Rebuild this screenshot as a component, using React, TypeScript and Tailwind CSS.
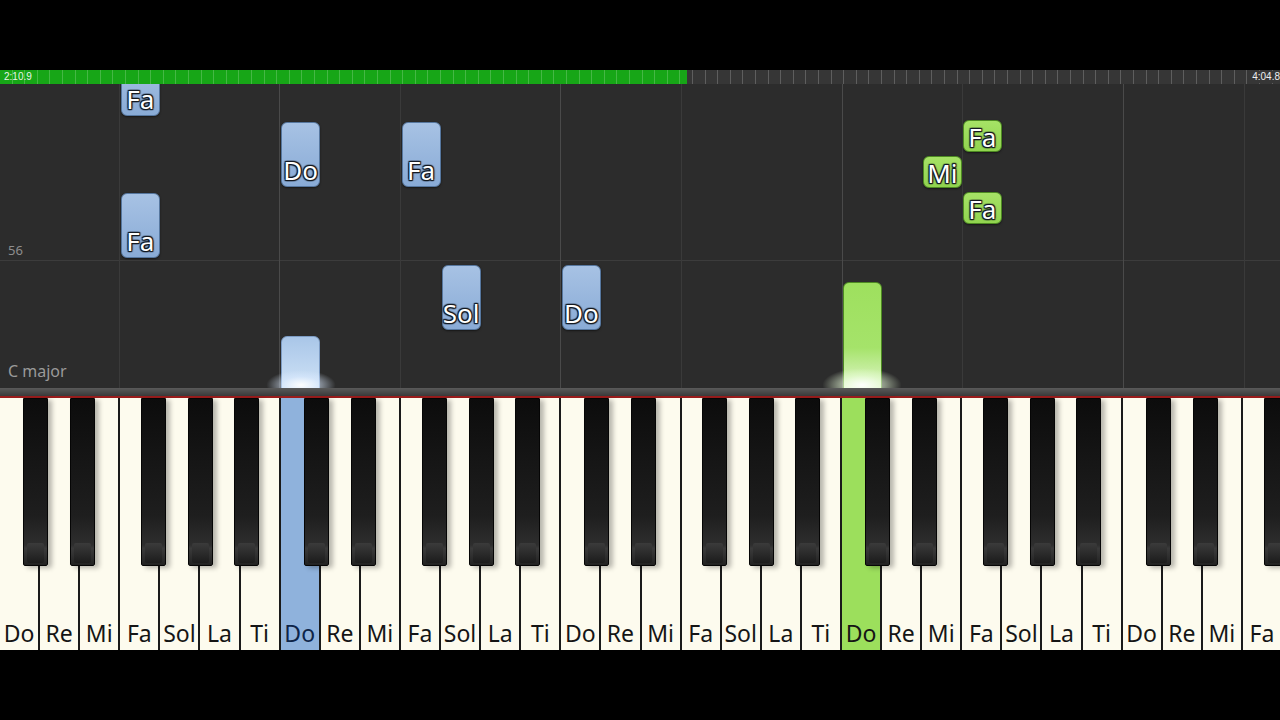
import React from "react";

const KEY_W = 40.1;
const names = ["Do", "Re", "Mi", "Fa", "Sol", "La", "Ti"];
const whiteKeys = Array.from({ length: 32 }, (_, i) => names[i % 7]);
// offsets of the black keys inside one octave
const blackOffsets = [23, 70, 141, 188, 234];
const blackKeys: number[] = [];
for (let o = 0; o < 5; o++) {
  blackOffsets.forEach((b) => {
    const x = o * 7 * KEY_W + b;
    if (x < 1280) blackKeys.push(x);
  });
}

type Note = { key: number; top: number; h: number; label: string; color: "blue" | "green" };

const notes: Note[] = [
  { key: 3, top: -24, h: 56, label: "Fa", color: "blue" },
  { key: 7, top: 38, h: 65, label: "Do", color: "blue" },
  { key: 10, top: 38, h: 65, label: "Fa", color: "blue" },
  { key: 3, top: 109, h: 65, label: "Fa", color: "blue" },
  { key: 11, top: 181, h: 65, label: "Sol", color: "blue" },
  { key: 14, top: 181, h: 65, label: "Do", color: "blue" },
  { key: 24, top: 36, h: 32, label: "Fa", color: "green" },
  { key: 23, top: 72, h: 32, label: "Mi", color: "green" },
  { key: 24, top: 108, h: 32, label: "Fa", color: "green" },
];

const vLines = [
  { x: 119, bright: false },
  { x: 279, bright: true },
  { x: 400, bright: false },
  { x: 560, bright: true },
  { x: 681, bright: false },
  { x: 842, bright: true },
  { x: 962, bright: false },
  { x: 1123, bright: true },
  { x: 1244, bright: false },
];

const outline =
  "[text-shadow:0_0_2px_#141a22,1px_1px_1px_#141a22,-1px_-1px_1px_#141a22,1px_-1px_1px_#141a22,-1px_1px_1px_#141a22,0_1px_1px_#141a22,0_-1px_1px_#141a22]";

const App = () => {
  return (
    <div className="w-[1280px] h-[720px] bg-black flex flex-col overflow-hidden font-['Noto_Sans',sans-serif]">
      {/* TOP BLACK */}
      <div className="h-[70px] shrink-0" />

      {/* PROGRESS BAR */}
      <div className="h-[14px] shrink-0 flex relative bg-[#363636]">
        <div className="w-[687px] h-full bg-[#17a617]" />
        <div className="absolute inset-0 bg-[repeating-linear-gradient(90deg,transparent_0,transparent_11.6px,rgba(255,255,255,0.2)_11.6px,rgba(255,255,255,0.2)_12.6px)]" />
        <span className="absolute left-[4px] top-[1px] text-[10px] leading-[12px] text-[#e8f5e8] font-['Liberation_Sans',sans-serif]">
          2:10.9
        </span>
        <span className="absolute right-0 top-[1px] text-[10px] leading-[12px] text-[#eee] font-['Liberation_Sans',sans-serif] bg-[#363636] pl-[2px]">
          4:04.8
        </span>
      </div>

      {/* NOTE AREA */}
      <div className="h-[304px] shrink-0 relative bg-[#2c2c2c] overflow-hidden">
        <div className="absolute left-0 right-0 top-[176px] h-px bg-[#3c3c3c]" />
        {vLines.map((l) => (
          <div
            key={l.x}
            className={`absolute top-0 bottom-0 w-px ${l.bright ? "bg-[#4a4a4a]" : "bg-[#3a3a3a]"}`}
            style={{ left: l.x }}
          />
        ))}
        <span className="absolute left-[8px] top-[157px] text-[13px] text-[#8e8e8e]">56</span>
        <span className="absolute left-[8px] top-[275px] text-[16px] text-[#9a9a9a]">C major</span>

        {notes.map((n, i) => (
          <div
            key={i}
            className={`absolute w-[39px] rounded-[6px] border flex items-end justify-center shadow-[0_1px_2px_rgba(0,0,0,0.5)] ${
              n.color === "blue"
                ? "bg-[linear-gradient(180deg,#a7c2e4,#89abd6)] border-[#56779f]"
                : "bg-[linear-gradient(180deg,#a6e266,#91d44f)] border-[#4d8a22]"
            } ${n.h < 40 ? "pb-[1px]" : "pb-[3px]"}`}
            style={{ left: n.key * KEY_W + 0.5, top: n.top, height: n.h }}
          >
            <span className={`text-[26px] leading-[26px] text-white ${outline}`}>{n.label}</span>
          </div>
        ))}

        {/* PLAYING NOTES */}
        <div
          className="absolute w-[39px] h-[60px] top-[252px] rounded-t-[6px] bg-[linear-gradient(180deg,#a9c6e8,#d4e6f8)] border border-[#7d9cc4]"
          style={{ left: 7 * KEY_W + 0.5 }}
        />
        <div
          className="absolute w-[39px] h-[110px] top-[198px] rounded-t-[6px] bg-[linear-gradient(180deg,#9ee05e_0%,#a5e36a_60%,#e6f8d4_100%)] border border-[#4d8a22]"
          style={{ left: 21 * KEY_W + 0.5 }}
        />
        <div
          className="absolute w-[70px] h-[30px] top-[286px] rounded-full bg-[radial-gradient(ellipse_at_center,rgba(255,255,255,0.95),rgba(220,235,255,0.5)_40%,transparent_70%)]"
          style={{ left: 7 * KEY_W - 15 }}
        />
        <div
          className="absolute w-[80px] h-[34px] top-[284px] rounded-full bg-[radial-gradient(ellipse_at_center,rgba(255,255,255,0.95),rgba(235,255,220,0.5)_40%,transparent_70%)]"
          style={{ left: 21 * KEY_W - 20 }}
        />
      </div>

      {/* SEPARATOR */}
      <div className="h-[8px] shrink-0 bg-[linear-gradient(180deg,#5a5a5a,#3a3a3a)]" />
      <div className="h-[2px] shrink-0 bg-[#9a1c1c]" />

      {/* KEYBOARD */}
      <div className="h-[252px] shrink-0 relative flex bg-[#fdfbee]">
        {whiteKeys.map((k, i) => {
          const blue = i === 7;
          const green = i === 21;
          return (
            <div
              key={i}
              className={`shrink-0 h-full border-r-[2px] border-[#1a1a1a] flex items-end justify-center pb-[2px] ${
                blue ? "bg-[#8fb2dc]" : green ? "bg-[#9cdf5c]" : "bg-[#fdfbee]"
              }`}
              style={{ width: KEY_W }}
            >
              <span
                className={`text-[23px] leading-[30px] ${blue ? "text-[#0d2448]" : "text-[#151515]"}`}
              >
                {k}
              </span>
            </div>
          );
        })}

        {blackKeys.map((x) => (
          <div
            key={x}
            className="absolute top-0 h-[168px] w-[25px] rounded-b-[2px] border border-[#050505] bg-[linear-gradient(180deg,#0c0c0c_0%,#1e1e1e_70%,#2e2e2e_88%,#3a3a3a_90%,#222_100%)] shadow-[4px_2px_5px_rgba(0,0,0,0.28)] flex flex-col justify-end"
            style={{ left: x }}
          >
            <div className="h-[20px] mx-[3px] mb-[2px] rounded-[2px] bg-[linear-gradient(180deg,#3b3b3b,#1c1c1c)]" />
          </div>
        ))}
      </div>

      {/* BOTTOM BLACK */}
      <div className="flex-1" />
    </div>
  );
};

export default App;
